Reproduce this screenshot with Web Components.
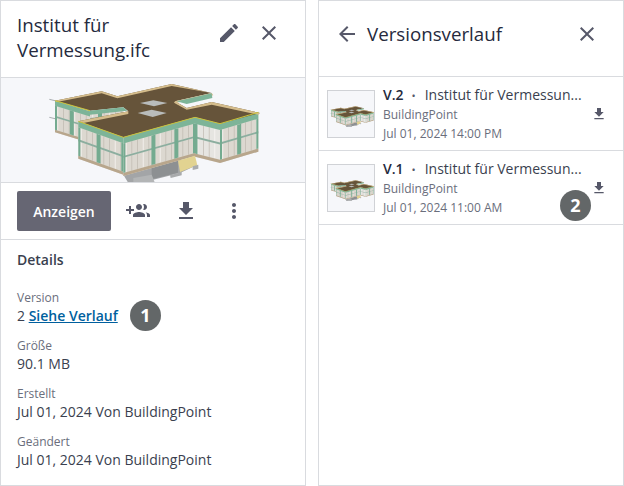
<!DOCTYPE html>
<html lang="de">
<head>
<meta charset="utf-8">
<title>Versionsverlauf</title>
<style>
  html, body { margin: 0; height: 100%; }
  body {
    display: flex;
    gap: 12px;
    width: 624px;
    height: 486px;
    overflow: hidden;
    background: #fff;
    font-family: "Open Sans", sans-serif;
    color: #252a3d;
  }
</style>
</head>
<body>
<file-details></file-details>
<version-history></version-history>

<script>
const ICONS = {
    edit: 'M3 17.25V21h3.75L17.81 9.94l-3.75-3.75L3 17.25zM20.71 7.04c.39-.39.39-1.02 0-1.41l-2.34-2.34c-.39-.39-1.02-.39-1.41 0l-1.83 1.83 3.75 3.75 1.83-1.83z',
    close: 'M19 6.41L17.59 5 12 10.59 6.41 5 5 6.41 10.59 12 5 17.59 6.41 19 12 13.41 17.59 19 19 17.59 13.41 12z',
    back: 'M20 11H7.83l5.59-5.59L12 4l-8 8 8 8 1.41-1.41L7.83 13H20v-2z',
    download: 'M19 9h-4V3H9v6H5l7 7 7-7zM5 18v2h14v-2H5z',
    more: 'M12 8c1.1 0 2-.9 2-2s-.9-2-2-2-2 .9-2 2 .9 2 2 2zm0 2c-1.1 0-2 .9-2 2s.9 2 2 2 2-.9 2-2-.9-2-2-2zm0 6c-1.1 0-2 .9-2 2s.9 2 2 2 2-.9 2-2-.9-2-2-2z',
    share: 'M8 10H5V7H3v3H0v2h3v3h2v-3h3v-2zm10 1c1.66 0 2.99-1.34 2.99-3S19.66 5 18 5c-.32 0-.63.05-.91.14.57.81.9 1.79.9 2.86s-.34 2.04-.9 2.86c.28.09.59.14.91.14zm-5 0c1.66 0 2.99-1.34 2.99-3S14.66 5 13 5c-1.66 0-3 1.34-3 3s1.34 3 3 3zm6.62 2.16c.83.73 1.38 1.66 1.38 2.84v2h3v-2c0-1.54-2.37-2.49-4.38-2.84zM13 13c-2 0-6 1-6 3v2h12v-2c0-2-4-3-6-3z'
};

class AppIcon extends HTMLElement {
    connectedCallback() {
        const size = this.getAttribute('size') || 24;
        this.attachShadow({ mode: 'open' });
        this.shadowRoot.innerHTML = `
      <style>
        :host { display: block; flex: none; width: ${size}px; height: ${size}px; color: #565869; }
        svg { display: block; fill: currentColor; }
      </style>
      <svg width="${size}" height="${size}" viewBox="0 0 24 24"><path d="${ICONS[this.getAttribute('name')]}"/></svg>
    `;
    }
}

class StepBadge extends HTMLElement {
    constructor() {
        super();
        this.attachShadow({ mode: 'open' });
        this.shadowRoot.innerHTML = `
      <style>
        :host {
          position: absolute;
          width: 31px;
          height: 31px;
          border-radius: 50%;
          background: #636768;
          color: #fff;
          font: 700 18px/31px "Open Sans", sans-serif;
          text-align: center;
        }
      </style>
      <slot></slot>
    `;
    }
}

// draws the model, coordinates are 3x page pixels of the big preview
class BuildingView extends HTMLElement {
    constructor() {
        super();
        this.attachShadow({ mode: 'open' });
    }

    connectedCallback() {
        const width = this.getAttribute('width');
        const height = Math.round(width * 315 / 660);
        this.shadowRoot.innerHTML = `
      <style>
        :host { display: block; line-height: 0; }
      </style>
      <svg width="${width}" height="${height}" viewBox="0 0 660 315">${this.drawModel()}</svg>
    `;
    }

    quad(a, b, h, u0, u1, v0, v1, fill) {
        const pt = (u, v) => {
            const x = a[0] + (b[0] - a[0]) * u;
            const y = a[1] + (b[1] - a[1]) * u + h * v;
            return `${x.toFixed(1)},${y.toFixed(1)}`;
        };
        return `<polygon points="${pt(u0, v0)} ${pt(u1, v0)} ${pt(u1, v1)} ${pt(u0, v1)}" fill="${fill}"/>`;
    }

    face(a, b, h, columns, glass = '#dcd8d0') {
        const length = Math.abs(b[0] - a[0]);
        let out = this.quad(a, b, h, 0, 1, 0, 1, glass);
        const step = 17 / length;
        let n = 0;
        for (let u = step / 2; u < 1; u += step) {
            const w = 1 / length;
            const colour = n++ % 3 === 0 ? '#fbfaf7' : '#bdb8ae';
            out += this.quad(a, b, h, u - w, u + w, 0.16, 0.48, colour);
            out += this.quad(a, b, h, u - w, u + w, 0.53, 0.92, colour);
        }
        out += this.quad(a, b, h, 0, 1, 0, 0.16, '#7db498');
        out += this.quad(a, b, h, 0, 1, 0.48, 0.53, '#8cae9f');
        out += this.quad(a, b, h, 0, 1, 0.92, 1, '#b8a68c');
        columns.forEach((u) => {
            const half = 6 / length;
            out += this.quad(a, b, h, Math.max(0, u - half), Math.min(1, u + half), 0.16, 0.92, '#74ab90');
        });
        return out;
    }

    drawModel() {
        const slab = (y, x0, x1, dy) => `<line x1="${x0}" y1="${y}" x2="${x1}" y2="${y + dy}" stroke="#a9adb0" stroke-width="3"/>`;
        return `
      <polygon points="250,290 420,245 470,262 420,285 340,305 330,315 265,315" fill="#a3a5a7"/>
      <polygon points="335,268 414,248 414,284 335,304" fill="#8d9092"/>
      <polygon points="280,300 335,290 345,315 280,315" fill="#b3b5b6"/>
      <polygon points="390,292 425,282 425,292 392,300" fill="#a8aaac"/>
      ${this.face([45, 68], [150, 100], 95, [0, 0.48])}
      ${this.face([150, 100], [250, 90], 42, [0.3])}
      ${this.face([540, 137], [655, 103], 118, [0, 0.5, 1])}
      ${this.face([465, 118], [540, 137], 118, [0.02], '#e6e5e1')}
      ${this.face([115, 130], [250, 178], 112, [0, 0.45, 1])}
      ${this.face([250, 178], [465, 118], 116, [0, 0.42, 0.74, 1])}
      <polygon points="414,248 465,233 472,262 420,282" fill="#e2d391"/>
      <polygon points="458,265 475,260 475,272 458,276" fill="#aaacae"/>
      ${slab(64, 28, 45, 4)}${slab(118, 28, 45, 4)}
      <polygon points="45,68 185,40 232,55 395,18 515,45 405,70 440,90 515,72 660,105 540,137 465,118 250,178 115,130 265,100 250,88 150,98" fill="#66543a"/>
      <polygon points="45,68 185,40 232,55 395,18 515,45 520,52 410,74 405,70 515,45 395,24 232,61 185,46 50,72" fill="#d5bd8c"/>
      <polygon points="405,70 440,90 515,72 660,105 655,110 515,80 440,95 402,74" fill="#d5bd8c"/>
      <polygon points="115,130 265,100 265,108 130,135" fill="#d5bd8c"/>
      <polygon points="410,70 515,46 517,60 440,78" fill="#7db498"/>
      <polygon points="150,98 250,88 262,98 150,110" fill="#7db498"/>
      <polyline points="115,130 250,178 465,118 540,137 655,103" fill="none" stroke="#c9c23b" stroke-width="3"/>
      <polyline points="45,68 150,98" fill="none" stroke="#c9c23b" stroke-width="3"/>
      <polygon points="300,75 340,67 382,75 342,85" fill="#b9bcbb"/>
      <polygon points="293,105 335,95 380,105 338,117" fill="#b9bcbb"/>
    `;
    }
}

class DetailItem extends HTMLElement {
    constructor() {
        super();
        this.attachShadow({ mode: 'open' });
        this.shadowRoot.innerHTML = `
      <style>
        :host { display: block; position: relative; height: 48px; }
        .label { font-size: 12px; line-height: 20px; height: 18px; color: #6a6e7c; }
        .value { font-size: 14px; line-height: 20px; color: #3a3f4f; }
      </style>
      <div class="label">${this.getAttribute('label')}</div>
      <div class="value"><slot></slot></div>
    `;
    }
}

class VersionRow extends HTMLElement {
    constructor() {
        super();
        this.attachShadow({ mode: 'open' });
    }

    connectedCallback() {
        this.shadowRoot.innerHTML = `
      <style>
        :host {
          display: flex;
          position: relative;
          box-sizing: border-box;
          height: 74px;
          padding: 8px 0 0 8px;
          border-bottom: 1px solid #d9dbdf;
        }
        .thumb {
          display: flex;
          align-items: center;
          justify-content: center;
          box-sizing: border-box;
          flex: none;
          width: 48px;
          height: 48px;
          margin: 5px 8px 0 0;
          padding-top: 3px;
          background: #f6f7fa;
          border: 1px solid #d0d2d6;
        }
        .text { width: 200px; flex: none; }
        .top { font-size: 14px; line-height: 20px; color: #3a3f4f; white-space: nowrap; }
        .top b { font-weight: 600; color: #252a3d; }
        .dot { margin: 0 9px 0 8px; font-size: 11px; color: #565869; }
        .sub { font-size: 12px; line-height: 18px; height: 19px; color: #6a6e7c; }
        app-icon { margin: 21px 0 0 8px; }
      </style>
      <div class="thumb"><building-view width="46"></building-view></div>
      <div class="text">
        <div class="top"><b>${this.getAttribute('version')}</b><span class="dot">•</span>Institut für Vermessun...</div>
        <div class="sub">BuildingPoint</div>
        <div class="sub">${this.getAttribute('date')}</div>
      </div>
      <app-icon name="download" size="16"></app-icon>
      <slot></slot>
    `;
    }
}

class FileDetails extends HTMLElement {
    constructor() {
        super();
        this.attachShadow({ mode: 'open' });
        this.shadowRoot.innerHTML = `
      <style>
        :host {
          display: flex;
          flex-direction: column;
          box-sizing: border-box;
          flex: none;
          width: 306px;
          height: 486px;
          border: 1px solid #d9dbdf;
        }
        header {
          display: flex;
          align-items: flex-start;
          box-sizing: border-box;
          height: 77px;
          padding: 11px 24px 0 16px;
          border-bottom: 1px solid #d9dbdf;
        }
        h1 { flex: 1; margin: 0; font-size: 18.72px; font-weight: 400; line-height: 25px; color: #252a3d; }
        header app-icon { margin-top: 9px; }
        header app-icon:last-child { margin-left: 16px; }
        .preview {
          display: flex;
          justify-content: center;
          box-sizing: border-box;
          height: 105px;
          padding-right: 6px;
          overflow: hidden;
          background: #f6f7fa;
          border-bottom: 1px solid #d9dbdf;
        }
        .actions {
          display: flex;
          align-items: center;
          box-sizing: border-box;
          height: 57px;
          padding: 0 16px;
          border-bottom: 1px solid #d9dbdf;
        }
        button {
          width: 94px;
          height: 40px;
          margin-right: 15px;
          padding: 0;
          border: 0;
          border-radius: 2px;
          background: #666673;
          color: #fff;
          font: 600 14px "Open Sans", sans-serif;
        }
        .actions app-icon { margin-right: 24px; }
        .details { padding: 10px 16px 0; }
        h2 { margin: 0 0 18px; font-size: 14px; font-weight: 600; line-height: 20px; color: #3a3f4f; }
        a { color: #005f9e; font-weight: 600; }
        step-badge { left: 113px; top: 12px; }
      </style>
      <header>
        <h1>Institut für Vermessung.ifc</h1>
        <app-icon name="edit"></app-icon>
        <app-icon name="close"></app-icon>
      </header>
      <div class="preview"><building-view width="220"></building-view></div>
      <div class="actions">
        <button>Anzeigen</button>
        <app-icon name="share"></app-icon>
        <app-icon name="download"></app-icon>
        <app-icon name="more"></app-icon>
      </div>
      <div class="details">
        <h2>Details</h2>
        <detail-item label="Version">2 <a href="#">Siehe Verlauf</a><step-badge>1</step-badge></detail-item>
        <detail-item label="Größe">90.1 MB</detail-item>
        <detail-item label="Erstellt">Jul 01, 2024 Von BuildingPoint</detail-item>
        <detail-item label="Geändert">Jul 01, 2024 Von BuildingPoint</detail-item>
      </div>
    `;
    }
}

class VersionHistory extends HTMLElement {
    constructor() {
        super();
        this.attachShadow({ mode: 'open' });
        this.shadowRoot.innerHTML = `
      <style>
        :host {
          display: block;
          box-sizing: border-box;
          flex: none;
          width: 306px;
          height: 486px;
          border: 1px solid #d9dbdf;
        }
        header {
          display: flex;
          align-items: center;
          box-sizing: border-box;
          height: 76px;
          padding: 0 24px 10px 16px;
          border-bottom: 1px solid #d9dbdf;
        }
        h1 { flex: 1; margin: 0 0 0 8px; font-size: 18.72px; font-weight: 400; line-height: 25px; color: #252a3d; }
        step-badge { left: 241px; top: 39px; }
      </style>
      <header>
        <app-icon name="back"></app-icon>
        <h1>Versionsverlauf</h1>
        <app-icon name="close"></app-icon>
      </header>
      <version-row version="V.2" date="Jul 01, 2024 14:00 PM"></version-row>
      <version-row version="V.1" date="Jul 01, 2024 11:00 AM"><step-badge>2</step-badge></version-row>
    `;
    }
}

customElements.define('app-icon', AppIcon);
customElements.define('step-badge', StepBadge);
customElements.define('building-view', BuildingView);
customElements.define('detail-item', DetailItem);
customElements.define('version-row', VersionRow);
customElements.define('file-details', FileDetails);
customElements.define('version-history', VersionHistory);
</script>
</body>
</html>
